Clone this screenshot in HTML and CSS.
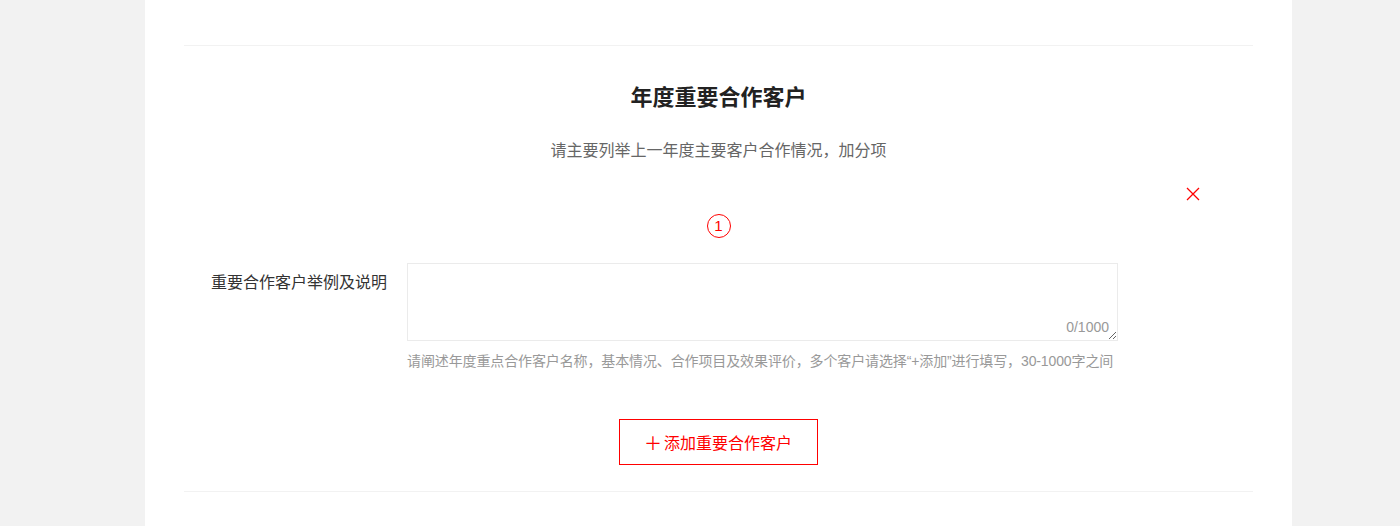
FILE: index.html
```html
<!DOCTYPE html>
<html lang="zh-CN">
<head>
<meta charset="utf-8">
<title>年度重要合作客户</title>
<link rel="stylesheet" href="styles.css">
</head>
<body>
<div class="panel">
  <div class="divider top"></div>
  <section class="section">
    <h2 class="title">年度重要合作客户</h2>
    <p class="subtitle">请主要列举上一年度主要客户合作情况，加分项</p>
    <div class="item">
      <button class="remove" type="button" aria-label="删除">
        <svg width="14" height="14" viewBox="0 0 14 14"><path d="M1 1L13 13M13 1L1 13" stroke="#f00" stroke-width="1.3" fill="none"/></svg>
      </button>
      <div class="index">1</div>
      <div class="row">
        <label class="label">重要合作客户举例及说明</label>
        <div class="field">
          <div class="textarea-wrap">
            <textarea class="textarea"></textarea>
            <span class="count">0/1000</span>
          </div>
          <div class="hint">请阐述年度重点合作客户名称，基本情况、合作项目及效果评价，多个客户请选择“+添加”进行填写，30-1000字之间</div>
        </div>
      </div>
    </div>
    <div class="actions">
      <button class="add" type="button"><span class="plus">＋</span>添加重要合作客户</button>
    </div>
  </section>
  <div class="divider"></div>
</div>
</body>
</html>
```

FILE: styles.css
```css
html, body {
  margin: 0;
  padding: 0;
}
body {
  background: #f2f2f2;
  font-family: "Liberation Sans", "Noto Sans CJK SC", sans-serif;
  color: #333;
}
.panel {
  width: 1069px;
  margin-left: 145px;
  padding: 45px 39px 0;
  background: #fff;
  height: 481px;
}
.divider {
  height: 1px;
  background: #f2f2f2;
}
.section {
  display: flex;
  flex-direction: column;
  align-items: center;
}
.title {
  margin: 37px 0 0;
  font-size: 22px;
  line-height: 30px;
  font-weight: bold;
  color: #222;
}
.subtitle {
  margin: 26px 0 0;
  font-size: 16px;
  line-height: 24px;
  color: #666;
}
.item {
  position: relative;
  align-self: stretch;
  display: flex;
  flex-direction: column;
  align-items: center;
  padding-top: 51px;
}
.remove {
  position: absolute;
  top: 24px;
  right: 53px;
  width: 14px;
  height: 14px;
  padding: 0;
  border: 0;
  background: none;
  display: flex;
}
.index {
  width: 22px;
  height: 22px;
  border: 1px solid #f00;
  border-radius: 50%;
  color: #f00;
  font-size: 15px;
  line-height: 22px;
  text-align: center;
}
.row {
  align-self: stretch;
  display: flex;
  gap: 20px;
  margin-top: 25px;
}
.label {
  width: 203px;
  flex: none;
  text-align: right;
  font-size: 16px;
  line-height: 24px;
  padding-top: 8px;
  color: #333;
}
.field {
  width: 711px;
}
.textarea-wrap {
  position: relative;
  height: 78px;
}
.textarea {
  display: block;
  box-sizing: border-box;
  width: 711px;
  height: 78px;
  margin: 0;
  border: 1px solid #ebebeb;
  border-radius: 0;
  resize: vertical;
  outline: none;
  font-family: inherit;
  font-size: 14px;
  padding: 8px 10px;
}
.count {
  position: absolute;
  right: 9px;
  bottom: 5px;
  font-size: 14px;
  line-height: 18px;
  color: #999;
}
.hint {
  margin-top: 10px;
  font-size: 14px;
  line-height: 20px;
  color: #999;
  white-space: nowrap;
  letter-spacing: -0.12px;
}
.actions {
  margin-top: 48px;
  margin-bottom: 26px;
}
.add {
  box-sizing: border-box;
  width: 199px;
  height: 46px;
  margin-left: -1px;
  border: 1px solid #f00;
  background: #fff;
  color: #f00;
  font-family: inherit;
  font-size: 16px;
  display: flex;
  align-items: center;
  justify-content: center;
  padding: 0;
}
.plus {
  font-size: 18px;
  margin-right: 2px;
}
```
